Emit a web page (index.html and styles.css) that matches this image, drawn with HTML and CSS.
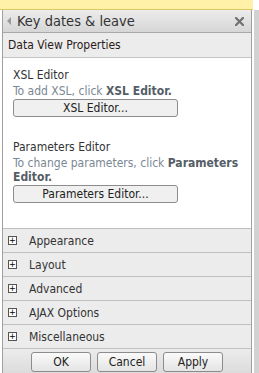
FILE: index.html
```html
<!DOCTYPE html>
<html lang="en">
<head>
  <meta charset="UTF-8">
  <title>Key dates &amp; leave</title>
  <link rel="stylesheet" href="styles.css">
</head>
<body>

  <div class="topbar"></div>

  <div class="page">
    <div class="toolpane">

      <div class="pane-header">
        <span class="arrow"></span>
        <span class="pane-title">Key dates &amp; leave</span>
        <svg class="close" width="9" height="9" viewBox="0 0 9 9">
          <path d="M1 1 L8 8 M8 1 L1 8" stroke="#707070" stroke-width="2.2" stroke-linecap="square"/>
        </svg>
      </div>

      <div class="pane-sub">Data View Properties</div>

      <div class="pane-body">
        <div class="editor-block">
          <div class="editor-title">XSL Editor</div>
          <div class="editor-hint">To add XSL, click <b>XSL Editor.</b></div>
          <button class="editor-btn">XSL Editor...</button>
        </div>

        <div class="editor-block">
          <div class="editor-title">Parameters Editor</div>
          <div class="editor-hint">To change parameters, click <b>Parameters Editor.</b></div>
          <button class="editor-btn">Parameters Editor...</button>
        </div>
      </div>

      <div class="section"><span class="plus">+</span>Appearance</div>
      <div class="section"><span class="plus">+</span>Layout</div>
      <div class="section"><span class="plus">+</span>Advanced</div>
      <div class="section"><span class="plus">+</span>AJAX Options</div>
      <div class="section"><span class="plus">+</span>Miscellaneous</div>

      <div class="pane-footer">
        <button class="foot-btn">OK</button>
        <button class="foot-btn">Cancel</button>
        <button class="foot-btn">Apply</button>
      </div>

    </div>
    <div class="scrollbar"></div>
  </div>

</body>
</html>
```

FILE: styles.css
```css
* {
  margin: 0;
  padding: 0;
  box-sizing: border-box;
}

body {
  background-color: #ffffff;
  font-family: "DejaVu Sans Condensed", "DejaVu Sans", Tahoma, sans-serif;
  font-size: 12px;
  color: #333;
  overflow: hidden;
}

.topbar {
  height: 10px;
  width: 253px;
  background-color: #fff1a8;
  border-bottom: 1px solid #e0c860;
}

.page {
  display: flex;
  padding-left: 2px;
}

.toolpane {
  width: 250px;
  border-left: 1px solid #a0a0a0;
  border-right: 1px solid #a0a0a0;
  display: flex;
  flex-direction: column;
}

.scrollbar {
  width: 5px;
  margin-left: 2px;
  background-color: #d2d2d2;
  height: 400px;
}

.pane-header {
  height: 23px;
  display: flex;
  align-items: center;
  padding: 0 7px 0 4px;
  background: linear-gradient(#ececec, #d6d6d6);
  border-bottom: 1px solid #a8a8a8;
}

.arrow {
  width: 0;
  height: 0;
  border-top: 4px solid transparent;
  border-bottom: 4px solid transparent;
  border-right: 4px solid #9a9a9a;
  margin-right: 6px;
}

.pane-title {
  font-size: 14.5px;
  color: #333;
  flex: 1;
}

.close {
  display: block;
}

.pane-sub {
  height: 25px;
  line-height: 24px;
  padding-left: 5px;
  background-color: #ececec;
  border-bottom: 1px solid #c4c4c4;
  color: #2a1a1a;
}

.pane-body {
  background-color: #ffffff;
  padding: 9px 0 25px 10px;
}

.editor-block {
  margin-bottom: 22px;
}

.editor-block:last-child {
  margin-bottom: 0;
}

.editor-title {
  line-height: 17px;
}

.editor-hint {
  color: #7a8794;
  line-height: 14px;
  margin-bottom: 1px;
  padding-right: 8px;
}

.editor-hint b {
  color: #555d66;
}

.editor-btn {
  display: block;
  width: 165px;
  height: 18px;
  font-family: inherit;
  font-size: 12px;
  color: #222;
  background-color: #f0f0f0;
  border: 1px solid #8c8c8c;
  border-radius: 3px;
}

.section {
  height: 24px;
  display: flex;
  align-items: center;
  padding-left: 5px;
  background-color: #ececec;
  border-top: 1px solid #c0c0c0;
  color: #333;
}

.plus {
  width: 9px;
  height: 9px;
  border: 1px solid #555;
  background-color: #fff;
  font-size: 9px;
  line-height: 7px;
  text-align: center;
  margin-right: 12px;
  color: #000;
}

.pane-footer {
  height: 30px;
  display: flex;
  justify-content: center;
  align-items: flex-start;
  gap: 6px;
  padding-top: 3px;
  background: linear-gradient(#ececec, #d8d8d8);
  border-top: 1px solid #c0c0c0;
}

.foot-btn {
  width: 60px;
  height: 20px;
  font-family: inherit;
  font-size: 12px;
  color: #222;
  background: linear-gradient(#fafafa, #e4e4e4);
  border: 1px solid #8c8c8c;
  border-radius: 3px;
}
```
